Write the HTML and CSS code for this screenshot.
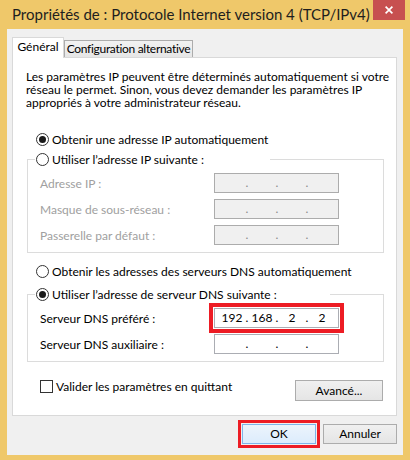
FILE: index.html
```html
<!DOCTYPE html>
<html lang="fr">
<head>
<meta charset="utf-8">
<title>Propriétés de : Protocole Internet version 4 (TCP/IPv4)</title>
<link rel="stylesheet" href="styles.css">
</head>
<body>
<div class="window">
  <div class="titlebar">
    <span class="title">Propriétés de : Protocole Internet version 4 (TCP/IPv4)</span>
    <button class="close" aria-label="Fermer"><svg width="8" height="8" viewBox="0 0 8 8"><path d="M0.6 0.6 L7.4 7.4 M7.4 0.6 L0.6 7.4" stroke="#fff" stroke-width="1.7" fill="none"/></svg></button>
  </div>
  <div class="client">
    <div class="tabs">
      <div class="tab active">Général</div>
      <div class="tab alt">Configuration alternative</div>
    </div>
    <div class="panel">
      <p class="desc">Les paramètres IP peuvent être déterminés automatiquement si votre<br>réseau le permet. Sinon, vous devez demander les paramètres IP<br>appropriés à votre administrateur réseau.</p>

      <div class="radio-row first"><span class="radio checked"></span>Obtenir une adresse IP automatiquement</div>

      <fieldset class="group g-ip">
        <legend class="legend w-ip"><span class="radio"></span>Utiliser l’adresse IP suivante :</legend>
        <div class="fields">
          <span class="lbl disabled">Adresse IP :</span>
          <div class="ip disabled"><span></span><i>.</i><span></span><i>.</i><span></span><i>.</i><span></span></div>
          <span class="lbl disabled">Masque de sous-réseau :</span>
          <div class="ip disabled"><span></span><i>.</i><span></span><i>.</i><span></span><i>.</i><span></span></div>
          <span class="lbl disabled">Passerelle par défaut :</span>
          <div class="ip disabled"><span></span><i>.</i><span></span><i>.</i><span></span><i>.</i><span></span></div>
        </div>
      </fieldset>

      <div class="radio-row dns-auto"><span class="radio"></span>Obtenir les adresses des serveurs DNS automatiquement</div>

      <fieldset class="group g-dns">
        <legend class="legend w-dns"><span class="radio checked"></span>Utiliser l’adresse de serveur DNS suivante :</legend>
        <div class="fields">
          <span class="lbl">Serveur DNS préféré :</span>
          <div class="ip highlight"><span>192</span><i>.</i><span>168</span><i>.</i><span>2</span><i>.</i><span>2</span></div>
          <span class="lbl">Serveur DNS auxiliaire :</span>
          <div class="ip"><span></span><i>.</i><span></span><i>.</i><span></span><i>.</i><span></span></div>
        </div>
      </fieldset>

      <div class="bottom-row">
        <div class="check-row"><span class="checkbox"></span>Valider les paramètres en quittant</div>
        <button class="btn advanced">Avancé...</button>
      </div>
    </div>
    <div class="actions">
      <button class="btn ok">OK</button>
      <button class="btn">Annuler</button>
    </div>
  </div>
</div>
</body>
</html>
```
FILE: styles.css
```css
* { box-sizing: border-box; }
html, body { margin: 0; padding: 0; }
body {
  width: 410px;
  height: 460px;
  overflow: hidden;
  background: #efc86a;
  font-family: Lato, "Noto Sans", sans-serif;
  font-size: 12px;
  color: #000;
}
.window { display: flex; flex-direction: column; height: 460px; }

.titlebar { height: 29px; flex: none; display: flex; align-items: flex-start; }
.title {
  font-size: 15px;
  line-height: 20px;
  padding: 4px 0 0 12px;
  color: #1e1e1e;
  white-space: nowrap;
}
.close {
  margin-left: auto;
  margin-right: 5px;
  width: 32px;
  height: 20px;
  border: 0;
  padding: 0;
  background: #c75050;
  display: flex;
  align-items: center;
  justify-content: center;
}

.client {
  flex: 1;
  margin: 0 7px 5px;
  background: #f0f0f0;
  display: flex;
  flex-direction: column;
  padding: 8px 6px 11px 5px;
}

.tabs { display: flex; align-items: flex-end; height: 20px; }
.tab {
  height: 17px;
  line-height: 15px;
  padding: 0 4px;
  border: 1px solid #acacac;
  border-bottom: 0;
  background: linear-gradient(#f2f2f2, #e6e6e6);
  white-space: nowrap;
}
.tab.alt {
  width: 129px;
  padding: 0;
  text-align: center;
  letter-spacing: -0.3px;
}
.tab.active {
  position: relative;
  z-index: 1;
  height: 21px;
  width: 52px;
  margin-bottom: -1px;
  text-align: center;
  padding: 1px 0 0;
  background: #fff;
  border-color: #d9d9d9;
}

.panel {
  height: 359px;
  background: #fff;
  border: 1px solid #d9d9d9;
  padding: 12px 12px 14px 13px;
  display: flex;
  flex-direction: column;
}
.desc { margin: 0; line-height: 13px; white-space: nowrap; }

.radio-row { display: flex; align-items: center; height: 17px; padding-left: 10px; white-space: nowrap; }
.radio-row.first { margin-top: 22px; }
.radio-row.dns-auto { margin-top: 10px; }

.radio {
  flex: none;
  width: 13px;
  height: 13px;
  border: 1px solid #333;
  border-radius: 50%;
  background: #fff;
  display: inline-flex;
  align-items: center;
  justify-content: center;
  margin-right: 3px;
}
.radio.checked::after {
  content: "";
  width: 7px;
  height: 7px;
  border-radius: 50%;
  background: #1a1a1a;
}

.group {
  margin: 0 0 0 1px;
  padding: 0;
  border: 1px solid #dcdcdc;
  min-width: 0;
}
.g-ip { margin-top: 3px; }
.g-dns { margin-top: 6px; }
.legend {
  display: flex;
  align-items: center;
  height: 17px;
  margin-left: 7px;
  padding: 0 0 0 1px;
  white-space: nowrap;
}
.w-ip { width: 235px; }
.w-dns { width: 295px; }

.fields {
  display: grid;
  grid-template-columns: 174px 125px;
  row-gap: 6px;
  align-items: center;
  padding: 5px 0 7px 12px;
}
.lbl { white-space: nowrap; }
.lbl.disabled { color: #a0a0a0; }

.ip {
  height: 20px;
  border: 1px solid #abadb3;
  background: #fff;
  display: flex;
  padding-left: 5px;
  line-height: 18px;
}
.ip span { width: 24px; text-align: center; }
.ip i { width: 6px; text-align: center; font-style: normal; }
.ip.disabled { background: #f0f0f0; border-color: #acacac; color: #8a8a8a; }
.ip.highlight { outline: 4px solid #ed1c24; outline-offset: 1px; }

.bottom-row {
  margin-top: 18px;
  display: flex;
  justify-content: space-between;
  align-items: flex-start;
  padding: 0 1px 0 14px;
}
.check-row { display: flex; align-items: center; height: 13px; white-space: nowrap; }
.checkbox {
  width: 13px;
  height: 13px;
  border: 1px solid #333;
  background: #fff;
  margin-right: 3px;
  flex: none;
}

.btn {
  font-family: inherit;
  font-size: 12px;
  color: #000;
  padding: 0;
  border: 1px solid #acacac;
  background: linear-gradient(#f0f0f0, #e5e5e5);
  line-height: 16px;
}
.advanced { width: 88px; height: 21px; }

.actions {
  margin-top: 8px;
  display: flex;
  justify-content: flex-end;
  gap: 7px;
}
.actions .btn { width: 74px; height: 20px; }
.btn.ok {
  border-color: #7eb4ea;
  background: linear-gradient(#ecf4fc, #dcecfc);
  outline: 3px solid #ed1c24;
  outline-offset: 1px;
}
```
